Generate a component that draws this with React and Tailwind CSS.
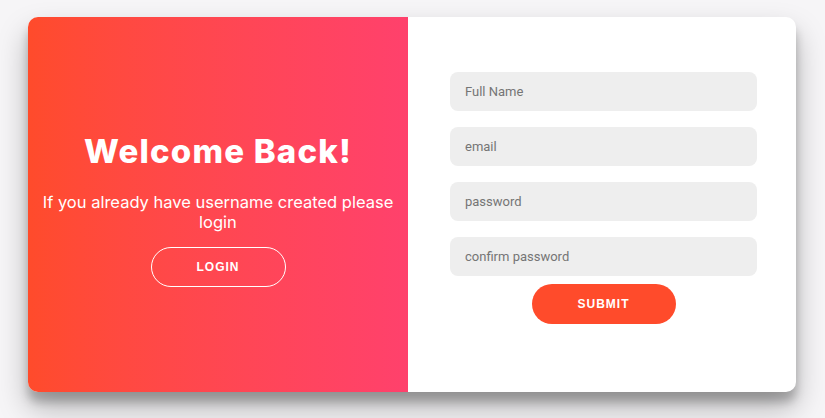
export default function App() {
  return (
    <div className="w-[825px] h-[418px] bg-[#f6f5f7] flex items-start justify-start pt-[17px] pl-[28px]" style={{ fontFamily: "Roboto, 'Liberation Sans', sans-serif" }}>
      <div className="w-[768px] h-[375px] rounded-[10px] overflow-hidden flex bg-white shadow-[0_16px_30px_rgba(0,0,0,0.27),0_10px_10px_rgba(0,0,0,0.22)]">
        <div className="w-[380px] h-full bg-gradient-to-r from-[#ff4b2b] to-[#ff416c] flex flex-col items-center justify-start text-white text-center px-[8px] pt-[114px]">
          <h1 className="text-[33px] leading-[40px] font-extrabold tracking-[1.2px]" style={{ fontFamily: "Inter, sans-serif" }}>Welcome Back!</h1>
          <p className="mt-[21px] text-[16.5px] leading-[20px] font-normal" style={{ fontFamily: "Inter, sans-serif" }}>If you already have username created please login</p>
          <button className="mt-[15px] w-[135px] h-[40px] rounded-full border border-white text-[12px] font-bold tracking-[1px] text-white" style={{ fontFamily: "'Liberation Sans', Arial, sans-serif" }}>LOGIN</button>
        </div>
        <div className="flex-1 h-full flex flex-col items-center pt-[55px] pl-[42px] pr-[39px]">
          <div className="w-full flex flex-col gap-[16px]">
            {["Full Name", "email", "password", "confirm password"].map((p) => (
              <input key={p} placeholder={p} className="w-full h-[39px] rounded-[8px] bg-[#eeeeee] px-[15px] text-[13px] text-[#333] placeholder:text-[#757575] outline-none" />
            ))}
          </div>
          <button className="mt-[8px] w-[144px] h-[40px] rounded-full bg-[#ff4b2b] text-white text-[12px] font-bold tracking-[1px]" style={{ fontFamily: "'Liberation Sans', Arial, sans-serif" }}>SUBMIT</button>
        </div>
      </div>
    </div>
  );
}
